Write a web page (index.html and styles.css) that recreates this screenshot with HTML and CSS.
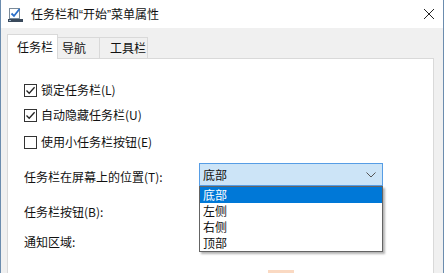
FILE: index.html
```html
<!DOCTYPE html>
<html lang="zh-CN">
<head>
<meta charset="utf-8">
<link rel="stylesheet" href="styles.css">
</head>
<body>
<div class="window">
  <div class="titlebar">
    <svg class="app-icon" width="15" height="16" viewBox="0 0 15 16">
      <rect x="1.5" y="1.5" width="10" height="10" fill="#fff" stroke="#7a8a99"/>
      <path d="M3.5 6.5 L6 9 L11.5 2" fill="none" stroke="#2a6fc9" stroke-width="1.8"/>
      <rect x="0" y="12" width="15" height="3" fill="#3a4a5c"/>
      <rect x="1" y="13" width="2" height="1" fill="#9fb6cc"/>
    </svg>
    <span class="title">任务栏和<span class="q">“</span>开始<span class="q">”</span>菜单属性</span>
    <svg class="close" width="12" height="12" viewBox="0 0 12 12">
      <path d="M1 1 L11 11 M11 1 L1 11" stroke="#222" stroke-width="1"/>
    </svg>
  </div>
  <div class="body">
    <div class="tabs">
      <div class="tab active">任务栏</div>
      <div class="tab">导航</div>
      <div class="tab">工具栏</div>
    </div>
    <div class="panel">
      <div class="check row1"><span class="box"><svg width="11" height="11" viewBox="0 0 11 11"><path d="M1.5 5.5 L4.2 8.3 L9.6 2.2" fill="none" stroke="#222" stroke-width="1.3"/></svg></span>锁定任务栏(L)</div>
      <div class="check row2"><span class="box"><svg width="11" height="11" viewBox="0 0 11 11"><path d="M1.5 5.5 L4.2 8.3 L9.6 2.2" fill="none" stroke="#222" stroke-width="1.3"/></svg></span>自动隐藏任务栏(U)</div>
      <div class="check row3"><span class="box"></span>使用小任务栏按钮(E)</div>
      <div class="field field-pos">
        <span class="label">任务栏在屏幕上的位置(T):</span>
        <div class="select">
          <span class="value">底部</span>
          <svg class="chev" width="10" height="6" viewBox="0 0 10 6"><path d="M0.5 0.5 L5 5 L9.5 0.5" fill="none" stroke="#555" stroke-width="1"/></svg>
          <ul class="list">
            <li class="sel">底部</li>
            <li>左侧</li>
            <li>右侧</li>
            <li>顶部</li>
          </ul>
        </div>
      </div>
      <div class="field field-btn"><span class="label">任务栏按钮(B):</span></div>
      <div class="field field-notif"><span class="label">通知区域:</span></div>
      <div class="orange"></div>
    </div>
  </div>
</div>
</body>
</html>
```

FILE: styles.css
```css
html, body {
  margin: 0;
  padding: 0;
  background: #fff;
}
body {
  font-family: "Noto Sans CJK SC", "Noto Sans", sans-serif;
  font-size: 12px;
  color: #111;
  overflow: hidden;
}
.window {
  width: 444px;
  height: 273px;
  box-sizing: border-box;
  border-left: 1px solid #6b8cae;
  border-right: 1px solid #6b8cae;
  background: #f0f0f0;
  display: flex;
  flex-direction: column;
  overflow: hidden;
}
.titlebar {
  height: 28px;
  flex: 0 0 28px;
  background: #fff;
  display: flex;
  align-items: center;
  padding-left: 7px;
  padding-right: 8px;
  box-sizing: border-box;
}
.app-icon {
  margin-right: 8px;
  margin-top: 1px;
}
.title {
  font-size: 12px;
  line-height: 16px;
  color: #111;
  flex: 1;
  white-space: nowrap;
}
.q {
  font-family: "Liberation Sans", sans-serif;
}
.body {
  flex: 1;
  padding: 6px 9px 0 6px;
  display: flex;
  flex-direction: column;
}
.tabs {
  display: flex;
  align-items: flex-end;
  height: 24px;
  position: relative;
  z-index: 1;
}
.tab {
  height: 21px;
  line-height: 20px;
  box-sizing: border-box;
  border: 1px solid #d9d9d9;
  border-bottom: none;
  background: #f0f0f0;
  padding: 0 0 0 4px;
  font-size: 12px;
  white-space: nowrap;
  overflow: hidden;
}
.tab + .tab {
  margin-left: -1px;
}
.tab:nth-child(2) {
  width: 43px;
}
.tab:nth-child(3) {
  width: 49px;
  padding-left: 10px;
}
.tab.active {
  height: 25px;
  line-height: 24px;
  background: #fff;
  width: 51px;
  padding-left: 9px;
  margin-bottom: -1px;
  position: relative;
  z-index: 2;
}
.panel {
  flex: 1;
  background: #fff;
  border: 1px solid #d9d9d9;
  border-bottom: none;
  padding: 0 0 0 16px;
  position: relative;
  display: flex;
  flex-direction: column;
  align-items: flex-start;
}
.check {
  display: flex;
  align-items: center;
  height: 16px;
  line-height: 16px;
  white-space: nowrap;
}
.row1 { margin-top: 23px; }
.row2 { margin-top: 9px; }
.row3 { margin-top: 11px; }
.box {
  width: 11px;
  height: 11px;
  border: 1px solid #333;
  background: #fff;
  margin-right: 4px;
  display: flex;
}
.field {
  display: flex;
  align-items: center;
  height: 16px;
  white-space: nowrap;
}
.field-pos {
  height: 23px;
  margin-top: 13px;
  align-items: center;
}
.field-pos .label {
  margin-top: 4px;
}
.field-btn { margin-top: 18px; }
.field-notif { margin-top: 14px; }
.label {
  width: 175px;
  line-height: 16px;
}
.select {
  width: 184px;
  height: 23px;
  box-sizing: border-box;
  border: 1px solid #569de5;
  background: #cce4f7;
  display: flex;
  align-items: center;
  padding: 0 6px 0 3px;
  position: relative;
}
.select .value {
  flex: 1;
  line-height: 16px;
}
.chev {
  margin-top: 1px;
}
.list {
  position: absolute;
  left: -1px;
  top: 22px;
  width: 184px;
  box-sizing: border-box;
  margin: 0;
  padding: 0;
  list-style: none;
  background: #fff;
  border: 1px solid #646464;
  box-shadow: 2px 2px 2px rgba(0, 0, 0, 0.3);
}
.list li {
  height: 16px;
  line-height: 16px;
  padding-left: 3px;
}
.list li.sel {
  background: #0078d7;
  color: #fff;
}
.orange {
  width: 26px;
  height: 3px;
  background: #fad9c2;
  margin-top: 20px;
  margin-left: 244px;
}
```
